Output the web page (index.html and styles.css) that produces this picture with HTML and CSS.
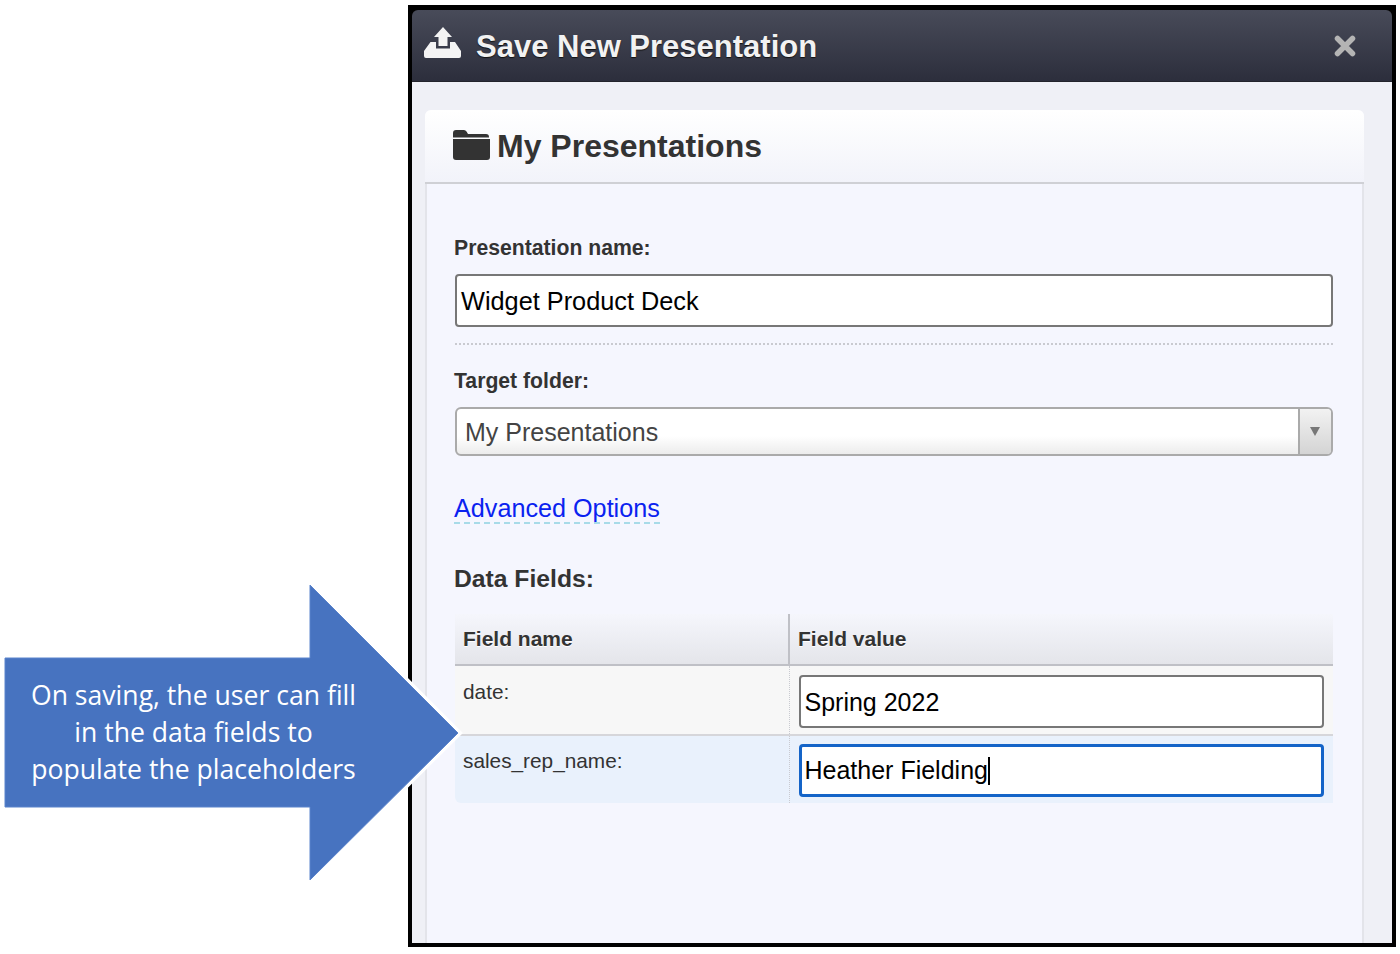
FILE: index.html
```html
<!DOCTYPE html>
<html lang="en">
<head>
  <meta charset="UTF-8" />
  <title>Save New Presentation</title>
  <link rel="stylesheet" href="styles.css">
</head>
<body>
  <div class="dialog">
    <div class="dialog-head">
      <svg class="icon-upload" width="37" height="31" viewBox="0 0 37 31">
        <path fill="#f4f4f4" d="M19 0L28 10H23.5V19H14.5V10H10Z" />
        <path fill="#f4f4f4" d="M0 24L6.500 15H12V21.500H26V15H31L37 24V29A2 2 0 0 1 35 31H2A2 2 0 0 1 0 29Z" />
      </svg>
      <h1>Save New Presentation</h1>
      <svg class="icon-close" width="22" height="22" viewBox="0 0 22 22">
        <path stroke="#b4b4b4" stroke-width="5.500" stroke-linecap="round" fill="none" d="M3.500 3.500L18.500 18.500M18.500 3.500L3.500 18.500" />
      </svg>
    </div>

    <div class="dialog-body">
      <div class="card">
        <div class="card-head">
          <svg class="icon-folder" width="37" height="31" viewBox="0 0 37 31">
            <path fill="#333" d="M0 7V3A3 3 0 0 1 3 0H11A3 3 0 0 1 13.500 1.500L15 4H33A3 3 0 0 1 36 7V7.500H0Z" />
            <path fill="#333" d="M0 9H37V27A3 3 0 0 1 34 30H3A3 3 0 0 1 0 27Z" />
          </svg>
          <h2>My Presentations</h2>
        </div>

        <div class="card-body">
          <div class="label">Presentation name:</div>
          <div class="field name-field">Widget Product Deck</div>
          <div class="dots"></div>

          <div class="label">Target folder:</div>
          <div class="select">
            <span class="select-text">My Presentations</span>
            <span class="select-btn"><i class="caret"></i></span>
          </div>

          <div class="link-row"><a class="adv-link">Advanced Options</a></div>

          <h3>Data Fields:</h3>

          <table class="fields">
            <thead>
              <tr><th class="col-name">Field name</th><th>Field value</th></tr>
            </thead>
            <tbody>
              <tr class="row-date">
                <td class="col-name">date:</td>
                <td><div class="field cell-field">Spring 2022</div></td>
              </tr>
              <tr class="row-rep">
                <td class="col-name">sales_rep_name:</td>
                <td><div class="field cell-field focused">Heather Fielding<span class="cursor"></span></div></td>
              </tr>
            </tbody>
          </table>
        </div>
      </div>
    </div>
  </div>

  <div class="callout">
    <svg class="callout-shape" width="470" height="310" viewBox="0 0 470 310">
      <polygon class="arrow-halo" points="5,78 310,78 310,5 458,153 310,300 310,227 5,227" />
      <polygon class="arrow-fill" points="5,78 310,78 310,5 458,153 310,300 310,227 5,227" />
    </svg>
    <p class="callout-text">On saving, the user can fill<br>in the data fields to<br>populate the placeholders</p>
  </div>
</body>
</html>
```

FILE: styles.css
```css
html, body {
  margin: 0;
  height: 100%;
  background: #fff;
  overflow: hidden;
}
body {
  font-family: "Liberation Sans", Arial, sans-serif;
  padding: 5px 0 0 408px;
  box-sizing: border-box;
}

.dialog {
  width: 988px;
  height: 942px;
  box-sizing: border-box;
  background: #000;
  border: 4px solid #000;
  border-top-width: 5px;
  display: flex;
  flex-direction: column;
  overflow: hidden;
}
.dialog-head {
  height: 71px;
  flex: none;
  display: flex;
  align-items: center;
  padding: 0 36px 0 12px;
  background: linear-gradient(to bottom, #484b59, #2c2e3c);
  border-bottom: 1px solid #23242c;
  border-radius: 6px 6px 0 0;
}
.dialog-head h1 {
  flex: 1;
  margin: 2px 0 0 15px;
  font-size: 31px;
  font-weight: bold;
  color: #f2f2f2;
  text-shadow: 0 1px 1px #111;
}
.icon-upload {
  margin-top: -6px;
}
.dialog-body {
  flex: 1;
  min-height: 0;
  background: #eff0f6;
  padding: 28px 28px 0 13px;
}

.card {
  height: 100%;
  display: flex;
  flex-direction: column;
  background: #f5f6fe;
  border-radius: 6px 6px 0 0;
}
.card-head {
  height: 72px;
  flex: none;
  display: flex;
  align-items: center;
  padding-left: 28px;
  background: linear-gradient(to bottom, #fff, #f2f3fa);
  border-bottom: 2px solid #cfd0d5;
  border-radius: 6px 6px 0 0;
}
.card-head h2 {
  margin: 0 0 0 7px;
  font-size: 32px;
  font-weight: bold;
  color: #333;
}
.icon-folder {
  margin-top: -2px;
}
.card-body {
  flex: 1;
  border: solid #e3e4ea;
  border-width: 0 2px;
  padding: 52px 29px 0 28px;
}

.label {
  font-size: 21.200px;
  line-height: 24px;
  font-weight: bold;
  color: #333;
  margin: 0 0 14px -1px;
}
.field {
  box-sizing: border-box;
  background: #fff;
  border: 2px solid #777;
  border-radius: 4px;
  color: #000;
  font-size: 25.300px;
  padding-left: 4px;
}
.name-field {
  height: 53px;
  line-height: 51px;
}
.dots {
  border-top: 2px dotted #c9cad0;
  margin: 16px 0 24px;
}

.select {
  height: 49px;
  box-sizing: border-box;
  display: flex;
  border: 2px solid #aaa;
  border-radius: 6px;
  background: linear-gradient(to bottom, #fff 60%, #ececec);
  overflow: hidden;
}
.select-text {
  flex: 1;
  padding-left: 8px;
  font-size: 25px;
  line-height: 46px;
  color: #444;
}
.select-btn {
  width: 31px;
  display: flex;
  align-items: center;
  justify-content: center;
  border-left: 2px solid #aaa;
  background: linear-gradient(to bottom, #f2f2f2, #d4d4d4);
}
.caret {
  width: 0;
  height: 0;
  margin-right: 2px;
  border: solid transparent;
  border-width: 9px 5.500px 0;
  border-top-color: #777;
}

.link-row {
  margin: 38px 0 0 -1px;
  height: 30px;
}
.adv-link {
  display: inline-block;
  font-size: 25.200px;
  line-height: 28px;
  color: #0a22f0;
  border-bottom: 2px dashed #a8dbe8;
}
h3 {
  margin: 41px 0 0 -1px;
  font-size: 24.700px;
  line-height: 28px;
  font-weight: bold;
  color: #333;
}

.fields {
  width: 100%;
  margin-top: 21px;
  border-collapse: collapse;
  table-layout: fixed;
}
.fields th {
  height: 50px;
  padding: 0 0 0 8px;
  text-align: left;
  font-size: 21px;
  color: #333;
  text-shadow: 0 1px 0 #fff;
  background: linear-gradient(to bottom, #f5f6fc, #e4e5ea);
  border-bottom: 2px solid #bfc0c6;
}
.fields th.col-name {
  width: 325px;
  border-right: 2px solid #bfc0c6;
}
.fields td {
  box-sizing: border-box;
  padding: 9px 9px 0;
  vertical-align: top;
}
.fields td.col-name {
  padding: 14px 0 0 8px;
  font-size: 20.800px;
  color: #333;
  border-right: 1px dotted #c9cad0;
}
.row-date td {
  height: 70px;
  background: #f7f7f7;
  border-bottom: 2px solid #d6d6da;
}
.row-rep td {
  height: 68px;
  padding-top: 8px;
  background: #e9f1fc;
}
.fields .row-rep td.col-name {
  padding-top: 13px;
  border-radius: 0 0 0 6px;
}
.cell-field {
  height: 53px;
  font-size: 25px;
  line-height: 50px;
}
.cell-field.focused {
  border: 3px solid #1464c8;
  line-height: 47px;
  padding-left: 3px;
}
.cursor {
  display: inline-block;
  width: 2px;
  height: 28px;
  background: #000;
  vertical-align: -6px;
}

/* the blue arrow sits over the dialog edge */
.callout {
  position: absolute;
  left: 0;
  top: 580px;
  width: 470px;
  height: 310px;
}
.callout-shape {
  display: block;
}
.arrow-halo {
  fill: #fff;
  stroke: #fff;
  stroke-width: 7;
  stroke-linejoin: miter;
}
.arrow-fill {
  fill: #4773c0;
  stroke: #5b84cc;
  stroke-width: 1;
}
.callout-text {
  position: absolute;
  left: 0;
  top: 97px;
  width: 387px;
  margin: 0;
  text-align: center;
  font-family: "Open Sans", sans-serif;
  font-size: 26.600px;
  line-height: 37px;
  color: #fff;
}
```
